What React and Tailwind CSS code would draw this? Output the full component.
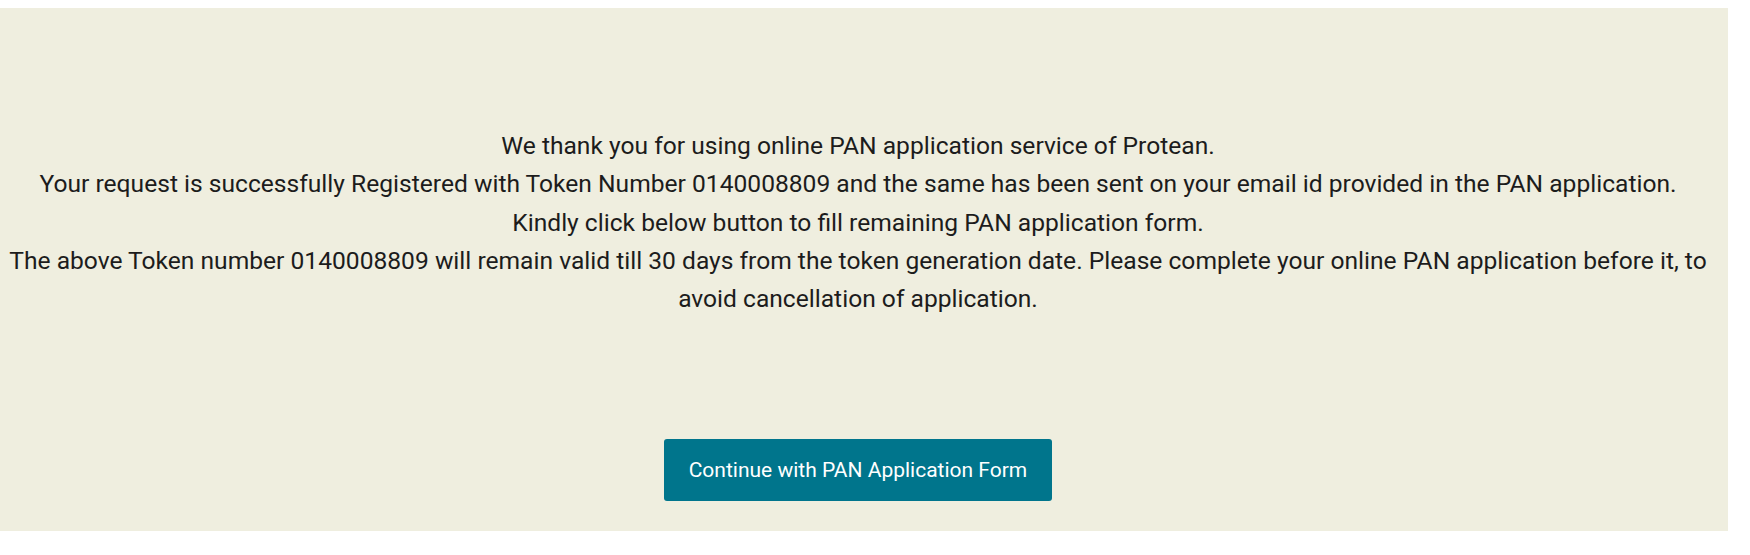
import React from 'react'

const TOKEN = '0140008809'

const App = () => {
  return (
    <div className="min-h-screen bg-white pt-[8px]" style={{ fontFamily: 'Roboto, "Liberation Sans", sans-serif' }}>
      <div className="w-[1728px] bg-[#efeedf] pt-[119px] pb-[30px] pr-[12px]">

        {/* Message */}
        <div className="text-center text-[24.6px] leading-[38.3px] text-[#1c1c1c]">
          <p>We thank you for using online PAN application service of Protean.</p>
          <p>Your request is successfully Registered with Token Number {TOKEN} and the same has been sent on your email id provided in the PAN application.</p>
          <p>Kindly click below button to fill remaining PAN application form.</p>
          <p>The above Token number {TOKEN} will remain valid till 30 days from the token generation date. Please complete your online PAN application before it, to avoid cancellation of application.</p>
        </div>

        {/* Action */}
        <div className="flex justify-center mt-[121px]">
          <button className="h-[62px] px-[25px] rounded-[3px] bg-[#00758c] text-white text-[21px]">
            Continue with PAN Application Form
          </button>
        </div>

      </div>
    </div>
  )
}

export default App
